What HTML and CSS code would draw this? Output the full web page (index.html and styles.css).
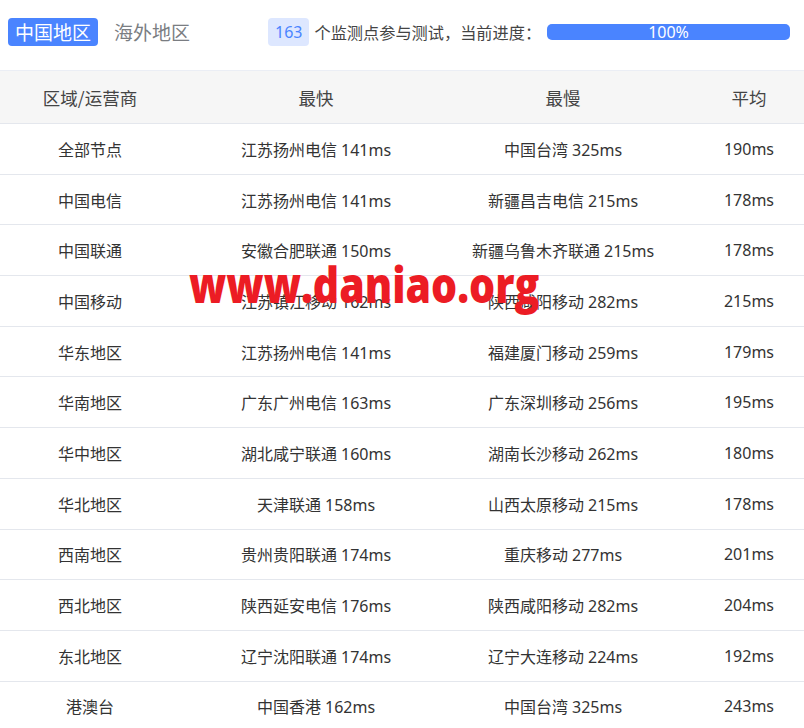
FILE: index.html
```html
<!DOCTYPE html>
<html lang="zh">
<head>
<meta charset="utf-8">
<link rel="stylesheet" href="styles.css">
</head>
<body>
<div class="page">
  <div class="topbar">
    <div class="tabs">
      <span class="tab active">中国地区</span>
      <span class="tab">海外地区</span>
    </div>
    <div class="progress-info">
      <span class="count">163</span>
      <span class="label">个监测点参与测试，当前进度：</span>
      <div class="bar"><div class="fill" style="width:100%">100%</div></div>
    </div>
  </div>
  <table class="grid">
    <colgroup><col class="c1"><col class="c2"><col class="c3"><col class="c4"></colgroup>
    <thead>
      <tr><th>区域/运营商</th><th>最快</th><th>最慢</th><th>平均</th></tr>
    </thead>
    <tbody>
      <tr><td>全部节点</td><td>江苏扬州电信 141ms</td><td>中国台湾 325ms</td><td>190ms</td></tr>
      <tr><td>中国电信</td><td>江苏扬州电信 141ms</td><td>新疆昌吉电信 215ms</td><td>178ms</td></tr>
      <tr><td>中国联通</td><td>安徽合肥联通 150ms</td><td>新疆乌鲁木齐联通 215ms</td><td>178ms</td></tr>
      <tr><td>中国移动</td><td>江苏镇江移动 162ms</td><td>陕西咸阳移动 282ms</td><td>215ms</td></tr>
      <tr><td>华东地区</td><td>江苏扬州电信 141ms</td><td>福建厦门移动 259ms</td><td>179ms</td></tr>
      <tr><td>华南地区</td><td>广东广州电信 163ms</td><td>广东深圳移动 256ms</td><td>195ms</td></tr>
      <tr><td>华中地区</td><td>湖北咸宁联通 160ms</td><td>湖南长沙移动 262ms</td><td>180ms</td></tr>
      <tr><td>华北地区</td><td>天津联通 158ms</td><td>山西太原移动 215ms</td><td>178ms</td></tr>
      <tr><td>西南地区</td><td>贵州贵阳联通 174ms</td><td>重庆移动 277ms</td><td>201ms</td></tr>
      <tr><td>西北地区</td><td>陕西延安电信 176ms</td><td>陕西咸阳移动 282ms</td><td>204ms</td></tr>
      <tr><td>东北地区</td><td>辽宁沈阳联通 174ms</td><td>辽宁大连移动 224ms</td><td>192ms</td></tr>
      <tr><td>港澳台</td><td>中国香港 162ms</td><td>中国台湾 325ms</td><td>243ms</td></tr>
    </tbody>
  </table>
  <div class="watermark">www.daniao.org</div>
</div>
</body>
</html>
```
FILE: styles.css
```css
html, body {
  margin: 0;
  padding: 0;
  background: #fff;
  overflow: hidden;
}
body {
  font-family: "Noto Sans", "Noto Sans CJK SC", sans-serif;
  color: #333;
}
.page {
  position: relative;
  width: 804px;
  height: 728px;
  overflow: hidden;
}
.topbar {
  height: 71px;
  display: flex;
  align-items: center;
  padding: 0 14px 6px 8px;
  box-sizing: border-box;
  border-bottom: 1px solid #ebeef5;
}
.tabs {
  display: flex;
  align-items: center;
  gap: 9px;
  width: 260px;
}
.tab {
  font-size: 19px;
  line-height: 28px;
  padding: 0 7px;
  color: #7a7d82;
  border-radius: 4px;
  font-family: "Noto Sans CJK SC", sans-serif;
}
.tab.active {
  background: #4a84ff;
  color: #fff;
}
.progress-info {
  display: flex;
  align-items: center;
  flex: 1;
}
.count {
  background: #dde7ff;
  color: #4a84ff;
  font-size: 16px;
  line-height: 28px;
  padding: 0 7px;
  border-radius: 4px;
  margin-right: 5px;
}
.label {
  font-size: 16.2px;
  color: #444;
  font-family: "Noto Sans CJK SC", sans-serif;
  margin-right: 6px;
}
.bar {
  flex: 1;
  height: 16px;
  border-radius: 5px;
  background: #e6ebf5;
}
.fill {
  height: 100%;
  background: #4a84ff;
  border-radius: 5px;
  color: #fff;
  font-size: 16px;
  line-height: 16px;
  text-align: center;
}
.grid {
  border-collapse: collapse;
  table-layout: fixed;
  width: 824px;
}
.c1 { width: 180px; }
.c2 { width: 272px; }
.c3 { width: 222px; }
.c4 { width: 150px; }
.grid th {
  background: #f6f6f6;
  height: 52px;
  font-weight: normal;
  font-size: 17.5px;
  color: #444;
  text-align: center;
  padding: 0;
  border-bottom: 1px solid #e4e7ed;
  font-family: "Noto Sans CJK SC", sans-serif;
}
.grid td {
  height: 49.7px;
  text-align: center;
  font-size: 16px;
  color: #333;
  padding: 0;
  border-bottom: 1px solid #e4e7ed;
}
.watermark {
  position: absolute;
  left: 189px;
  top: 259px;
  font-family: "Open Sans", "DejaVu Sans", sans-serif;
  font-weight: 800;
  font-size: 50px;
  line-height: 50px;
  color: #ec1c24;
  transform: scaleX(0.82);
  transform-origin: left top;
  white-space: nowrap;
}
```
